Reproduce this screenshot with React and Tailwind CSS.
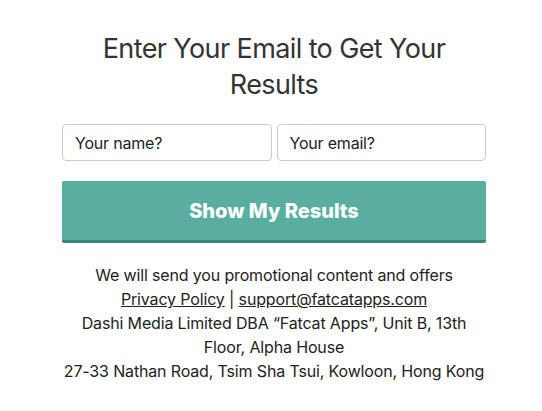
export default function App() {
  return (
    <div
      className="min-h-[411px] bg-white text-[#222]"
      style={{ fontFamily: "Inter, 'Noto Sans', sans-serif" }}
    >
      <div className="ml-[62px] w-[424px] pt-[31px]">
        <h2 className="text-center text-[27px] font-normal leading-[36px] tracking-[-0.6px] text-[#333]">
          Enter Your Email to Get Your Results
        </h2>

        <div className="mt-[21px] flex gap-[5px]">
          <input
            placeholder="Your name?"
            className="h-[37px] w-full rounded-[4px] border border-[#ccc] px-[12px] text-[16px] tracking-[-0.2px] text-[#222] placeholder:text-[#222] outline-none"
          />
          <input
            placeholder="Your email?"
            className="h-[37px] w-full rounded-[4px] border border-[#ccc] px-[12px] text-[16px] tracking-[-0.2px] text-[#222] placeholder:text-[#222] outline-none"
          />
        </div>

        <button className="mt-[20px] flex h-[62px] w-full items-center justify-center rounded-[2px] border-b-[3px] border-[#3e8476] bg-[#5aaea0] text-[20px] font-extrabold text-white">
          Show My Results
        </button>

        <div className="mt-[20px] text-center text-[16px] leading-[24px] tracking-[-0.15px] text-[#222]">
          <p>We will send you promotional content and offers</p>
          <p>
            <a href="#" className="underline">Privacy Policy</a> |{" "}
            <a href="#" className="underline">support@fatcatapps.com</a>
          </p>
          <p>Dashi Media Limited DBA “Fatcat Apps”, Unit B, 13th Floor, Alpha House</p>
          <p>27-33 Nathan Road, Tsim Sha Tsui, Kowloon, Hong Kong</p>
        </div>
      </div>
    </div>
  );
}
